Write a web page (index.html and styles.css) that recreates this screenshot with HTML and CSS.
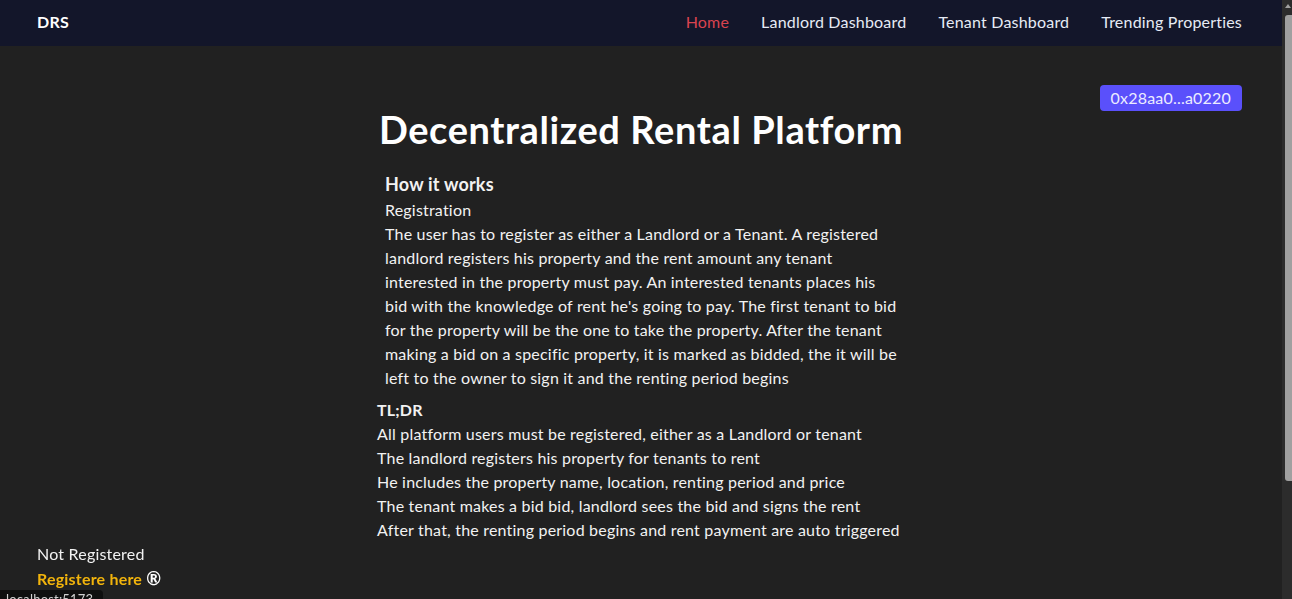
FILE: index.html
```html
<!DOCTYPE html>
<html lang="en">
<head>
<meta charset="utf-8">
<title>DRS</title>
<link rel="stylesheet" href="styles.css">
</head>
<body>
<nav class="navbar">
  <a class="brand" href="#">DRS</a>
  <ul class="nav-links">
    <li><a class="nav-link active" href="#">Home</a></li>
    <li><a class="nav-link" href="#">Landlord Dashboard</a></li>
    <li><a class="nav-link" href="#">Tenant Dashboard</a></li>
    <li><a class="nav-link" href="#">Trending Properties</a></li>
  </ul>
</nav>
<main class="page">
  <div class="account-row">
    <button class="account-btn">0x28aa0...a0220</button>
  </div>
  <h1 class="title">Decentralized Rental Platform</h1>
  <div class="content">
    <section class="how">
      <h3 class="how-title">How it works</h3>
      <p class="line">Registration</p>
      <p class="para">The user has to register as either a Landlord or a Tenant. A registered landlord registers his property and the rent amount any tenant interested in the property must pay. An interested tenants places his bid with the knowledge of rent he's going to pay. The first tenant to bid for the property will be the one to take the property. After the tenant making a bid on a specific property, it is marked as bidded, the it will be left to the owner to sign it and the renting period begins</p>
    </section>
    <section class="tldr">
      <h4 class="tldr-title">TL;DR</h4>
      <p class="line">All platform users must be registered, either as a Landlord or tenant</p>
      <p class="line">The landlord registers his property for tenants to rent</p>
      <p class="line">He includes the property name, location, renting period and price</p>
      <p class="line">The tenant makes a bid bid, landlord sees the bid and signs the rent</p>
      <p class="line">After that, the renting period begins and rent payment are auto triggered</p>
    </section>
  </div>
</main>
<div class="reg-status">
  <p class="reg-text">Not Registered</p>
  <a class="reg-link" href="#">Registere here <span class="reg-mark">®</span></a>
</div>
<div class="status-url">localhost:5173</div>
<div class="scrollbar" aria-hidden="true">
  <div class="scroll-arrow"></div>
  <div class="scroll-thumb"></div>
</div>
</body>
</html>
```
FILE: styles.css
```css
html, body {
  margin: 0;
  padding: 0;
}
body {
  background: #212121;
  color: #f2f2f2;
  font-family: "Lato", "Open Sans", sans-serif;
  font-size: 16px;
  line-height: 24px;
  letter-spacing: 0.2px;
  margin-right: 10px;
}
.navbar {
  height: 46px;
  box-sizing: border-box;
  padding: 0 40px 2px 37px;
  background: #13162a;
  display: flex;
  align-items: center;
  justify-content: space-between;
}
.brand {
  color: #ffffff;
  font-weight: 700;
  font-size: 16px;
  text-decoration: none;
  letter-spacing: 0.3px;
}
.nav-links {
  list-style: none;
  margin: 0;
  padding: 0;
  display: flex;
  gap: 32px;
}
.nav-link {
  color: #e6ebf5;
  text-decoration: none;
  font-size: 16px;
}
.nav-link.active {
  color: #d9434f;
}
.page {
  padding: 39px 40px 180px;
}
.account-row {
  display: flex;
  justify-content: flex-end;
}
.account-btn {
  background: #5a50fb;
  color: #ececff;
  border: none;
  border-radius: 4px;
  font-family: inherit;
  font-size: 16px;
  letter-spacing: 0.2px;
  line-height: 24px;
  padding: 1px 11px;
}
.title {
  margin: -4px 0 0;
  text-align: center;
  font-size: 38px;
  line-height: 44px;
  font-weight: 700;
  letter-spacing: 0.6px;
  color: #ffffff;
}
.content {
  width: fit-content;
  margin: 21px auto 0;
}
.how {
  padding: 0 8px;
  max-width: 512px;
  margin-bottom: 8px;
}
.how-title {
  margin: 0 0 2px;
  font-size: 18px;
  line-height: 24px;
  font-weight: 700;
}
.tldr-title {
  margin: 0;
  font-size: 16px;
  font-weight: 700;
}
.line, .para {
  margin: 0;
}
.reg-status {
  position: fixed;
  left: 37px;
  bottom: 8px;
}
.reg-text {
  margin: 0;
}
.reg-link {
  color: #f2b40c;
  font-weight: 700;
  text-decoration: none;
}
.reg-mark {
  color: #ffffff;
  font-size: 18px;
}
.status-url {
  position: fixed;
  left: 0;
  bottom: -9px;
  background: #0f0f0f;
  color: #d0d0d0;
  font-size: 13px;
  line-height: 18px;
  padding: 0 10px 0 6px;
  border-top-right-radius: 4px;
}
.scrollbar {
  position: fixed;
  top: 0;
  right: 0;
  width: 10px;
  height: 100%;
  background: #2c2c2c;
}
.scroll-arrow {
  width: 0;
  height: 0;
  margin: 4px auto 0 3px;
  border-left: 3px solid transparent;
  border-right: 3px solid transparent;
  border-bottom: 4px solid #a0a0a0;
}
.scroll-thumb {
  margin: 7px 0 0 3px;
  width: 7px;
  height: 466px;
  background: #a0a0a0;
  border-radius: 3px 0 0 3px;
}
```
